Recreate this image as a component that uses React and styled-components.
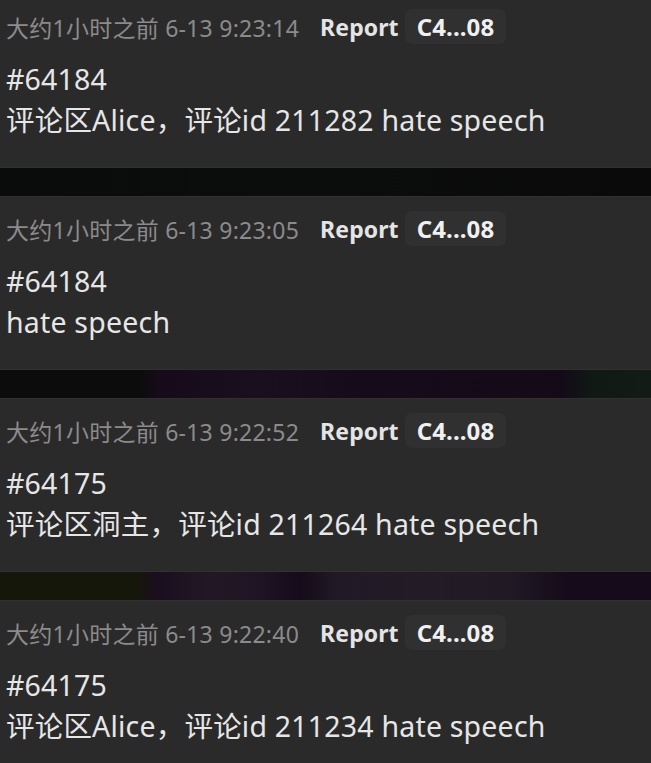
import React from "react";
import styled, { createGlobalStyle } from "styled-components";

const Global = createGlobalStyle`
  html, body { margin: 0; padding: 0; background: #0a0b0b; }
  body { font-family: "Noto Sans", "Noto Sans CJK SC", sans-serif; overflow: hidden; }
`;

const Feed = styled.div`
  display: flex;
  flex-direction: column;
  margin-top: -6px;
  width: 651px;
`;

const Card = styled.article`
  box-sizing: border-box;
  height: 174px;
  background: #2a2a2a;
  border-top: 1px solid #313131;
  border-bottom: 1px solid #313131;
  padding: 14px 6px 0 6px;
  display: flex;
  flex-direction: column;
`;

const Header = styled.div`
  display: flex;
  align-items: center;
  height: 35px;
`;

const Meta = styled.span`
  font-size: 23px;
  color: #8b8b8b;
  letter-spacing: 0.25px;
`;

const Kind = styled.span`
  margin-left: 21px;
  font-size: 23px;
  font-weight: 700;
  color: #e4e4e4;
  letter-spacing: 0.1px;
`;

const Badge = styled.span`
  margin-left: 6px;
  height: 35px;
  display: inline-flex;
  align-items: center;
  padding: 0 12px 0 12px;
  border-radius: 7px;
  background: #303030;
  font-size: 24px;
  font-weight: 700;
  color: #f0f0f0;
  letter-spacing: 0.1px;
`;

const Body = styled.div`
  margin-top: 15px;
  font-size: 28.5px;
  line-height: 41px;
  color: #e6e6e6;
`;

const Line = styled.div`
  white-space: nowrap;
  letter-spacing: 0.2px;
`;

const strips = {
  black: "linear-gradient(90deg, #0a0b0b 0%, #0b0c0c 50%, #0a0a0a 100%)",
  purple:
    "linear-gradient(90deg, #0b0c0b 0%, #0b0c0b 21%, #170b1b 25%, #190f1e 40%, #160b1a 55%, #140a18 86%, #101914 91%, #131b17 100%)",
  olive:
    "linear-gradient(90deg, #16170b 0%, #16170b 21%, #1a0e1e 24%, #221825 32%, #1f1424 40%, #150b1a 46%, #211a26 52%, #231c27 65%, #211a25 78%, #1c1320 82%, #150b1a 87%, #150b1a 100%)",
};

const Strip = styled.div`
  height: 28px;
  background: ${(p) => strips[p.$tone]};
`;

const items = [
  { time: "大约1小时之前 6-13 9:23:14", id: "#64184", text: "评论区Alice，评论id 211282 hate speech", strip: "black" },
  { time: "大约1小时之前 6-13 9:23:05", id: "#64184", text: "hate speech", strip: "purple" },
  { time: "大约1小时之前 6-13 9:22:52", id: "#64175", text: "评论区洞主，评论id 211264 hate speech", strip: "olive" },
  { time: "大约1小时之前 6-13 9:22:40", id: "#64175", text: "评论区Alice，评论id 211234 hate speech", strip: null },
];

export default function App() {
  return (
    <>
      <Global />
      <Feed>
        {items.map((it, i) => (
          <React.Fragment key={i}>
            <Card>
              <Header>
                <Meta>{it.time}</Meta>
                <Kind>Report</Kind>
                <Badge>C4...08</Badge>
              </Header>
              <Body>
                <Line>{it.id}</Line>
                <Line>{it.text}</Line>
              </Body>
            </Card>
            {it.strip && <Strip $tone={it.strip} />}
          </React.Fragment>
        ))}
      </Feed>
    </>
  );
}
